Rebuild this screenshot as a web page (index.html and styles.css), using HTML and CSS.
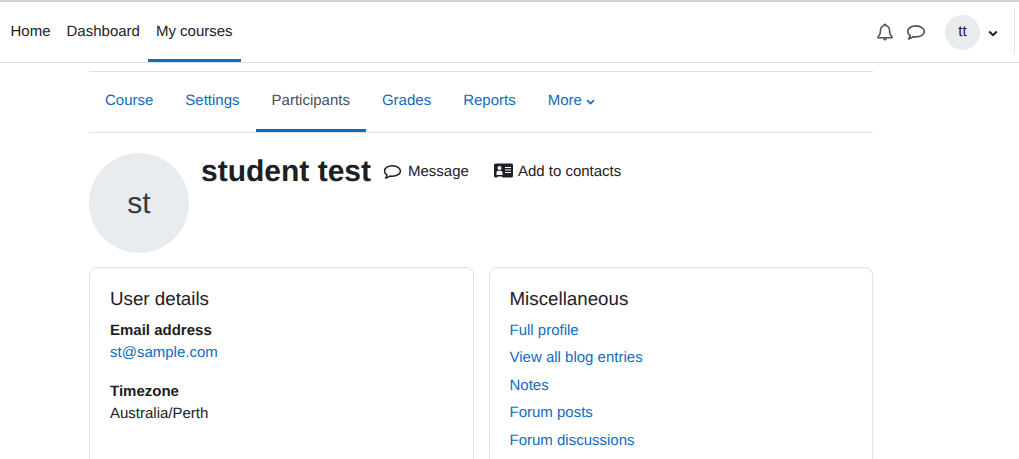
FILE: index.html
```html
<!DOCTYPE html>
<html lang="en">
<head>
<meta charset="utf-8">
<title>student test</title>
<link rel="stylesheet" href="styles.css">
</head>
<body>
<header class="navbar">
  <nav class="primary">
    <a class="pri-link" href="#">Home</a>
    <a class="pri-link" href="#">Dashboard</a>
    <a class="pri-link active" href="#">My courses</a>
  </nav>
  <div class="usernav">
    <svg class="ico-bell" width="16" height="18" viewBox="0 0 16 18"><path d="M8 1.200c-.6 0-1 .4-1 1v.5C4.700 3.200 3.500 5 3.500 7.500c0 3.300-1 5-2.500 6.300v.9h14v-.9c-1.500-1.300-2.500-3-2.500-6.300 0-2.500-1.200-4.300-3.500-4.800v-.5c0-.6-.4-1-1-1z" fill="none" stroke="#4f5458" stroke-width="1.500" stroke-linejoin="round"/><path d="M6 15.500a2 2 0 0 0 4 0z" fill="#4f5458"/></svg>
    <svg class="ico-chat" width="20" height="17" viewBox="0 0 18 15"><path d="M9 1.500C4.800 1.500 1.500 3.700 1.500 6.700c0 1.500.9 2.800 2.300 3.700-.2 1-.7 2-1.400 2.800 1.600-.2 3-.9 4.200-1.900.8.100 1.600.2 2.400.2 4.200 0 7.500-2.200 7.500-4.800S13.200 1.500 9 1.500z" fill="none" stroke="#4f5458" stroke-width="1.500" stroke-linejoin="round"/></svg>
    <span class="avatar-small">tt</span>
    <svg class="ico-caret" width="10" height="7" viewBox="0 0 10 7"><path d="M1.200 1.500 5 5.200l3.800-3.700" fill="none" stroke="#1d2125" stroke-width="2"/></svg>
    <span class="divider"></span>
  </div>
</header>
<main class="page">
  <nav class="tabs">
    <a class="tab" href="#">Course</a>
    <a class="tab" href="#">Settings</a>
    <a class="tab current" href="#">Participants</a>
    <a class="tab" href="#">Grades</a>
    <a class="tab" href="#">Reports</a>
    <a class="tab" href="#">More <svg class="tab-caret" width="9" height="6" viewBox="0 0 9 6"><path d="M1 1.200 4.500 4.500 8 1.200" fill="none" stroke="#0f6cbf" stroke-width="1.700"/></svg></a>
  </nav>
  <section class="profile">
    <div class="avatar-big">st</div>
    <h1 class="name">student test</h1>
    <a class="action action-msg" href="#">
      <svg width="19" height="16" viewBox="0 0 18 15"><path d="M9 1.500C4.800 1.500 1.500 3.700 1.500 6.700c0 1.500.9 2.800 2.300 3.700-.2 1-.7 2-1.400 2.800 1.600-.2 3-.9 4.200-1.900.8.100 1.600.2 2.400.2 4.200 0 7.500-2.200 7.500-4.800S13.200 1.500 9 1.500z" fill="none" stroke="#1d2125" stroke-width="1.400" stroke-linejoin="round"/></svg>
      Message
    </a>
    <a class="action action-add" href="#">
      <svg class="card-icon" width="19" height="15" viewBox="0 0 19 15"><path fill-rule="evenodd" fill="#1d2125" d="M1.500 0.500h16a1.500 1.500 0 0 1 1.500 1.500v11a1.500 1.500 0 0 1-1.500 1.500H8.500l-.5-1H3.500l-.5 1H1.500a1.500 1.500 0 0 1-1.500-1.500V2a1.500 1.500 0 0 1 1.500-1.500zM11 4v1h6V4zm0 2.500v1h6v-1zm0 2.500v1h6V9zM5.500 3a2 2 0 1 0 0 4 2 2 0 0 0 0-4zM2.500 12h6V9.500c0-1-.8-1.700-1.800-1.700H4.300c-1 0-1.800.7-1.800 1.700z"/></svg>
      Add to contacts
    </a>
  </section>
  <div class="cards">
    <section class="card">
      <h2 class="card-title">User details</h2>
      <dl class="details">
        <dt>Email address</dt>
        <dd><a href="#">st@sample.com</a></dd>
        <dt>Timezone</dt>
        <dd>Australia/Perth</dd>
      </dl>
    </section>
    <section class="card">
      <h2 class="card-title">Miscellaneous</h2>
      <ul class="links">
        <li><a href="#">Full profile</a></li>
        <li><a href="#">View all blog entries</a></li>
        <li><a href="#">Notes</a></li>
        <li><a href="#">Forum posts</a></li>
        <li><a href="#">Forum discussions</a></li>
      </ul>
    </section>
  </div>
</main>
</body>
</html>
```

FILE: styles.css
```css
* { box-sizing: border-box; }
html, body { height: 459px; overflow: hidden; }
body {
  margin: 0;
  background: #fff;
  color: #1d2125;
  font-family: "Liberation Sans", Arial, sans-serif;
  font-size: 15px;
  line-height: 22.5px;
  text-rendering: geometricPrecision;
}
a { color: #0f6cbf; text-decoration: none; }
.navbar {
  height: 63px;
  display: flex;
  justify-content: space-between;
  border-top: 2px solid #d2d2d2;
  border-bottom: 1px solid #dee2e6;
}
.primary { display: flex; padding-left: 2.500px; }
.pri-link {
  display: flex;
  align-items: center;
  padding: 1px 8px 0;
  color: #1d2125;
  height: 60px;
}
.pri-link.active { box-shadow: inset 0 -3px 0 #0f6cbf; }
.usernav { display: flex; align-items: center; }
.ico-bell { margin-right: 13px; }
.ico-chat { margin-right: 19px; margin-top: 1px; }
.avatar-small {
  width: 35px;
  height: 35px;
  border-radius: 50%;
  background: #e9ecef;
  display: flex;
  align-items: center;
  justify-content: center;
  margin-right: 8px;
}
.ico-caret { margin-right: 16px; margin-top: 2px; }
.divider { width: 1px; height: 45px; background: #dee2e6; margin-right: 4px; margin-top: -2px; }
.page { width: 784px; margin: 8px 0 0 89px; }
.tabs {
  display: flex;
  height: 62px;
  border-top: 1px solid #dee2e6;
  border-bottom: 1px solid #dee2e6;
}
.tab {
  display: flex;
  align-items: center;
  gap: 4px;
  padding: 0 16px 2px;
  height: 60px;
}
.tab.current { color: #495057; box-shadow: inset 0 -3px 0 #0f6cbf; }
.tab-caret { margin-top: 1px; }
.profile { display: flex; align-items: flex-start; padding-top: 20px; height: 134px; }
.avatar-big {
  width: 100px;
  height: 100px;
  padding-top: 2px;
  border-radius: 50%;
  background: #e9ecef;
  display: flex;
  align-items: center;
  justify-content: center;
  font-size: 30px;
  color: #343a40;
}
.name {
  margin: 1px 0 0 12px;
  font-size: 30px;
  line-height: 36px;
  font-weight: 700;
}
.action {
  display: flex;
  align-items: center;
  gap: 6px;
  color: #1d2125;
  height: 36px;
  margin-top: 1px;
}
.action-msg { margin-left: 12px; margin-right: 25px; }
.action-add { gap: 5px; }
.card-icon { margin-top: -3px; }
.cards { display: grid; grid-template-columns: 384.500px 384.500px; gap: 15px; }
.card {
  height: 240px;
  padding: 20px;
  border: 1px solid #dee2e6;
  border-radius: 8px;
}
.card-title {
  margin: 0 0 9px;
  font-size: 18.750px;
  font-weight: 400;
  line-height: 22.500px;
}
.details { margin: 0; }
.details dt { font-weight: 700; }
.details dd { margin: 0 0 16px; }
.links { list-style: none; margin: 0; padding: 0; }
.links li { margin-bottom: 5px; }
```
